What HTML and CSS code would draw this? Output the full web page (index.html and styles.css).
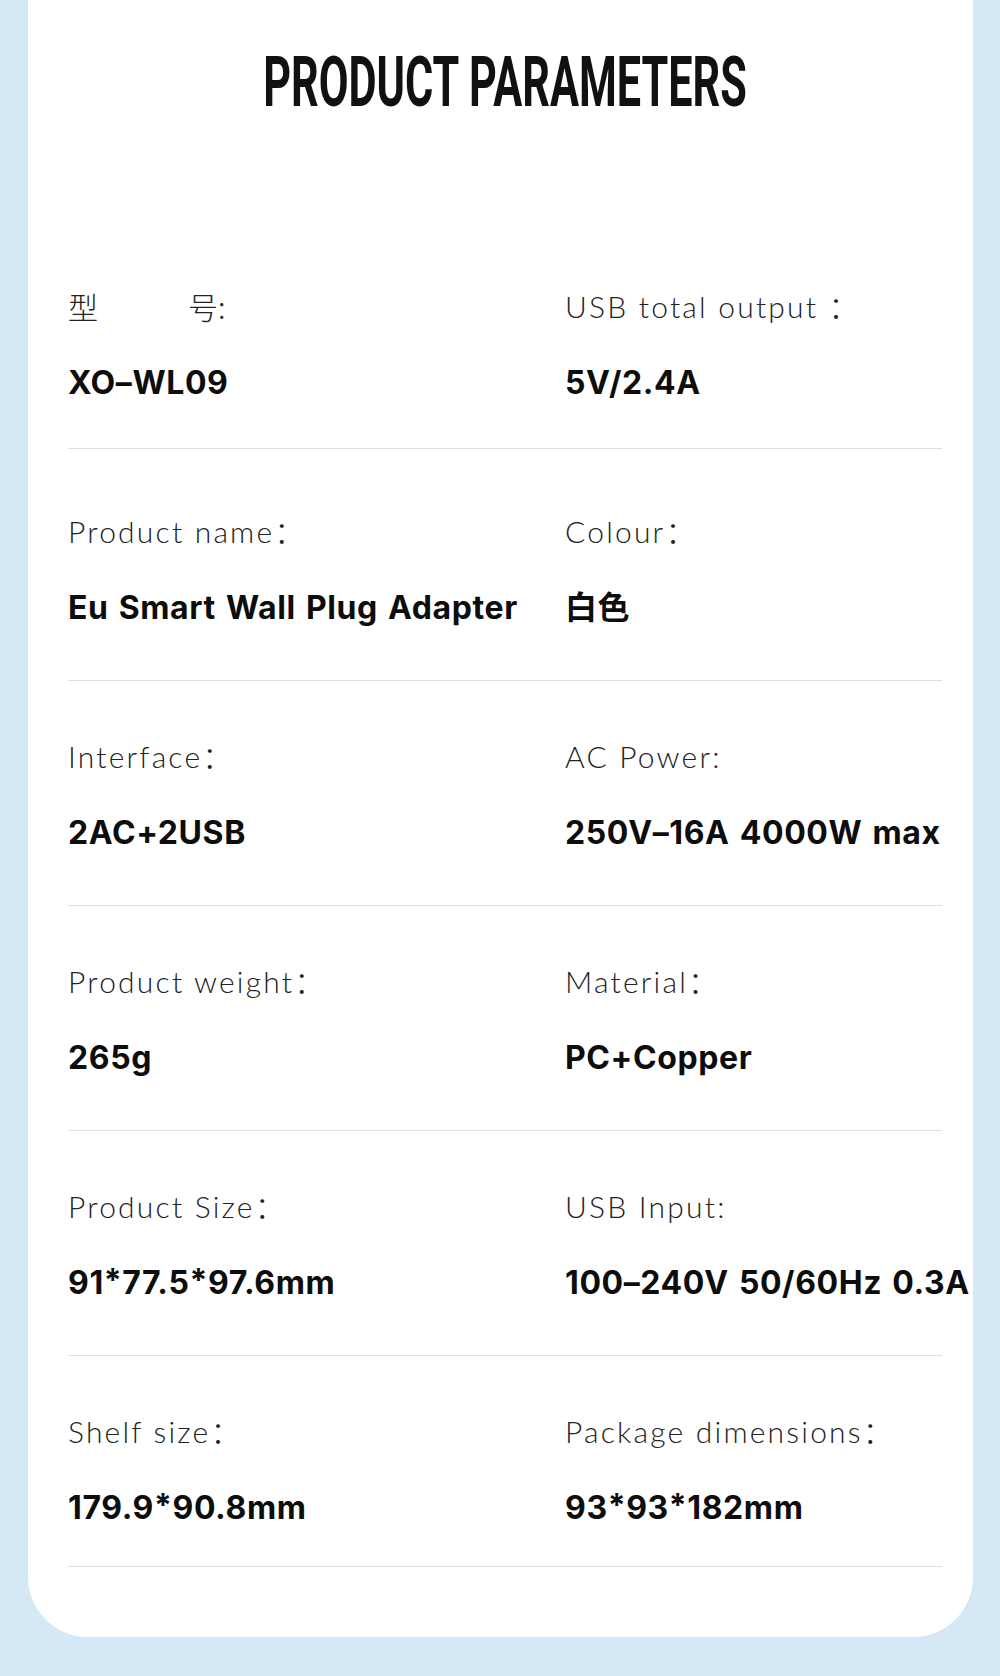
FILE: index.html
```html
<!DOCTYPE html>
<html lang="en">
<head>
<meta charset="utf-8">
<title>Product Parameters</title>
<link rel="stylesheet" href="styles.css">
</head>
<body>
<div class="page">
  <section class="card">
    <h1 class="title"><span class="title__text">PRODUCT PARAMETERS</span></h1>
    <div class="params">
      <div class="row row--first">
        <div class="cell"><p class="label label--cjk">型　　　号:</p><p class="value">XO–WL09</p></div>
        <div class="cell"><p class="label">USB total output ：</p><p class="value">5V/2.4A</p></div>
      </div>
      <div class="row row--second">
        <div class="cell"><p class="label">Product name：</p><p class="value">Eu Smart Wall Plug Adapter</p></div>
        <div class="cell"><p class="label">Colour：</p><p class="value">白色</p></div>
      </div>
      <div class="row">
        <div class="cell"><p class="label">Interface：</p><p class="value">2AC+2USB</p></div>
        <div class="cell"><p class="label">AC Power:</p><p class="value">250V–16A 4000W max</p></div>
      </div>
      <div class="row">
        <div class="cell"><p class="label">Product weight：</p><p class="value">265g</p></div>
        <div class="cell"><p class="label">Material：</p><p class="value">PC+Copper</p></div>
      </div>
      <div class="row">
        <div class="cell"><p class="label">Product Size：</p><p class="value">91<span class="star">*</span>77.5<span class="star">*</span>97.6mm</p></div>
        <div class="cell"><p class="label">USB Input:</p><p class="value">100–240V 50/60Hz 0.3A</p></div>
      </div>
      <div class="row row--last">
        <div class="cell"><p class="label">Shelf size：</p><p class="value">179.9<span class="star">*</span>90.8mm</p></div>
        <div class="cell"><p class="label">Package dimensions：</p><p class="value">93<span class="star">*</span>93<span class="star">*</span>182mm</p></div>
      </div>
    </div>
  </section>
</div>
</body>
</html>
```

FILE: styles.css
```css
* {
  box-sizing: border-box;
  margin: 0;
  padding: 0;
}

body {
  margin: 0;
  background: #d4e8f6;
}

.page {
  padding: 0 27px 40px 28px;
}

.card {
  background: #ffffff;
  border-radius: 0 0 60px 60px;
  padding: 48px 31px 70px 40px;
}

.title {
  text-align: center;
  font-family: Roboto, "DejaVu Sans", sans-serif;
  font-weight: 700;
  font-size: 70px;
  line-height: 68px;
  color: #111111;
}

.title__text {
  display: inline-block;
  white-space: nowrap;
  transform: scaleX(0.617);
  transform-origin: center;
}

.params {
  margin-top: 115px;
}

.row {
  display: grid;
  grid-template-columns: 497px 1fr;
  padding: 55px 0 52px;
  border-bottom: 1px solid #e0e0e0;
}

.row--first {
  padding-bottom: 45px;
}

.row--second {
  padding-top: 62px;
}

.row--last {
  padding-bottom: 38px;
}

.cell {
  display: flex;
  flex-direction: column;
  gap: 37px;
}

.label {
  font-family: Lato, "Noto Sans CJK SC", sans-serif;
  font-weight: 300;
  font-size: 30px;
  line-height: 40px;
  letter-spacing: 2.2px;
  color: #222222;
  white-space: nowrap;
}

.label--cjk {
  font-family: "Noto Sans CJK SC", sans-serif;
  letter-spacing: 0;
}

.value {
  font-family: Inter, "Liberation Sans", "Noto Sans CJK SC", sans-serif;
  font-weight: 700;
  font-size: 32px;
  line-height: 40px;
  letter-spacing: 0.6px;
  word-spacing: 2px;
  color: #0d0d0d;
  white-space: nowrap;
}

.star {
  vertical-align: 0.07em;
  line-height: 0;
}
```
